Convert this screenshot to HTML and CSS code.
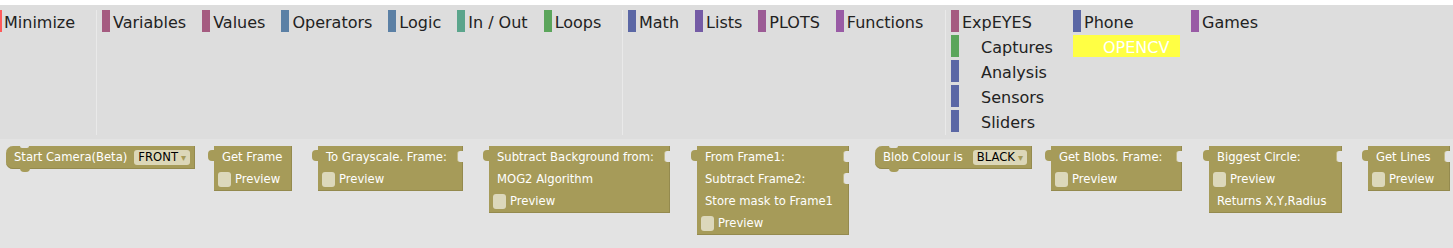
FILE: index.html
```html
<!DOCTYPE html>
<html lang="en">
<head>
  <meta charset="UTF-8">
  <title>Blocks - OpenCV</title>
  <link rel="stylesheet" href="styles.css">
</head>
<body>
  <nav class="toolbox">
    <div class="group g-min">
      <div class="cat"><span class="bar bar-min"></span>Minimize</div>
    </div>
    <div class="sep"></div>

    <div class="group g-core">
      <div class="cat"><span class="bar c-var"></span>Variables</div>
      <div class="cat"><span class="bar c-var"></span>Values</div>
      <div class="cat"><span class="bar c-op"></span>Operators</div>
      <div class="cat"><span class="bar c-op"></span>Logic</div>
      <div class="cat"><span class="bar c-io"></span>In / Out</div>
      <div class="cat"><span class="bar c-loop"></span>Loops</div>
    </div>
    <div class="sep"></div>

    <div class="group g-math">
      <div class="cat"><span class="bar c-math"></span>Math</div>
      <div class="cat"><span class="bar c-list"></span>Lists</div>
      <div class="cat"><span class="bar c-plot"></span>PLOTS</div>
      <div class="cat"><span class="bar c-fn"></span>Functions</div>
    </div>
    <div class="sep"></div>

    <div class="group g-ext">
      <div class="col col-eyes">
        <div class="cat"><span class="bar c-var"></span>ExpEYES</div>
        <div class="cat sub"><span class="bar c-loop"></span>Captures</div>
        <div class="cat sub"><span class="bar c-math"></span>Analysis</div>
        <div class="cat sub"><span class="bar c-math"></span>Sensors</div>
        <div class="cat sub"><span class="bar c-math"></span>Sliders</div>
      </div>
      <div class="col col-phone">
        <div class="cat"><span class="bar c-math"></span>Phone</div>
        <div class="cat sub sel"><span class="bar"></span>OPENCV</div>
      </div>
      <div class="col">
        <div class="cat"><span class="bar c-fn"></span>Games</div>
      </div>
    </div>
  </nav>

  <main class="workspace">
    <div class="blk hat b-camera">
      <div class="row">Start Camera(Beta) <span class="drop">FRONT<i>▾</i></span></div>
    </div>

    <div class="blk out b-frame">
      <div class="row">Get Frame</div>
      <div class="row chk"><span class="box"></span>Preview</div>
    </div>

    <div class="blk out b-gray">
      <div class="row">To Grayscale. Frame:<span class="notch"></span></div>
      <div class="row chk"><span class="box"></span>Preview</div>
    </div>

    <div class="blk out b-bgsub">
      <div class="row">Subtract Background from:<span class="notch"></span></div>
      <div class="row">MOG2 Algorithm</div>
      <div class="row chk"><span class="box"></span>Preview</div>
    </div>

    <div class="blk out b-diff">
      <div class="row">From Frame1:<span class="notch"></span></div>
      <div class="row">Subtract Frame2:<span class="notch"></span></div>
      <div class="row">Store mask to Frame1</div>
      <div class="row chk"><span class="box"></span>Preview</div>
    </div>

    <div class="blk hat b-colour">
      <div class="row">Blob Colour is <span class="drop">BLACK<i>▾</i></span></div>
    </div>

    <div class="blk out b-blobs">
      <div class="row">Get Blobs. Frame:<span class="notch"></span></div>
      <div class="row chk"><span class="box"></span>Preview</div>
    </div>

    <div class="blk out b-circle">
      <div class="row">Biggest Circle:<span class="notch"></span></div>
      <div class="row chk"><span class="box"></span>Preview</div>
      <div class="row">Returns X,Y,Radius</div>
    </div>

    <div class="blk out b-lines">
      <div class="row">Get Lines<span class="notch"></span></div>
      <div class="row chk"><span class="box"></span>Preview</div>
    </div>
  </main>
</body>
</html>
```

FILE: styles.css
```css
body {
  margin: 0;
  background: #fff;
  font-family: 'DejaVu Sans', sans-serif;
  overflow: hidden;
}

/* toolbox */
.toolbox {
  display: flex;
  margin-top: 5px;
  height: 134px;
  padding-top: 5px;
  box-sizing: border-box;
  background: #dddddd;
  font-size: 16px;
  color: #222;
}

.group {
  display: flex;
  align-items: flex-start;
  gap: 16px;
  padding-left: 5px;
  box-sizing: border-box;
}

.g-min { width: 96px; padding-left: 0; }
.g-core { width: 525px; }
.g-math { width: 322px; }
.g-ext { gap: 0; }

.sep {
  width: 1px;
  height: 125px;
  background: #e9e9e9;
}

.col {
  display: flex;
  flex-direction: column;
  align-items: flex-start;
  gap: 3px;
}
.col-eyes { width: 122px; }
.col-phone { width: 118px; }

.cat {
  display: flex;
  align-items: flex-start;
  height: 22px;
  line-height: 25px;
  white-space: nowrap;
}

.bar {
  width: 8px;
  height: 22px;
  margin-right: 3px;
  flex: none;
}
.bar-min { width: 2px; margin-right: 2px; background: #ff5a5a; }

.sub .bar { margin-right: 22px; }

.sel {
  background: #ffff44;
  color: #fff;
  padding-right: 11px;
}

.c-var { background: #a55b80; }
.c-op { background: #5b80a5; }
.c-io { background: #5ba58c; }
.c-loop { background: #5ba55b; }
.c-math { background: #5b67a5; }
.c-list { background: #745ba5; }
.c-plot { background: #9c5b95; }
.c-fn { background: #995ba5; }

/* workspace */
.workspace {
  display: flex;
  align-items: flex-start;
  height: 109px;
  padding: 7px 0 0 6px;
  box-sizing: border-box;
  background: #e3e3e3;
}

.blk {
  position: relative;
  flex: none;
  box-sizing: border-box;
  padding-bottom: 1px;
  margin-left: 26px;
  background: #a69b59;
  color: #fff;
  font-size: 11.6px;
  box-shadow: inset 0 -1px 0 #948a4e, inset -1px 0 0 #948a4e;
}

.hat + .blk.out { margin-left: 19px; }

.b-camera { width: 189px; margin-left: 0; }
.b-frame { width: 78px; }
.b-gray { width: 145px; }
.b-bgsub { width: 181px; }
.b-diff { width: 152px; margin-left: 27px; }
.b-colour { width: 157px; }
.b-blobs { width: 131px; margin-left: 20px; }
.b-circle { width: 133px; margin-left: 27px; }
.b-lines { width: 82px; }

.blk.out::before {
  content: "";
  position: absolute;
  left: -6px;
  top: 4px;
  width: 6px;
  height: 11px;
  background: #a69b59;
  border-radius: 4px 0 0 4px;
}

.blk.hat { border-radius: 7px 0 0 7px; }

.blk.hat::before {
  content: "";
  position: absolute;
  left: 14px;
  top: 0;
  width: 9px;
  height: 2px;
  background: #e3e3e3;
  border-radius: 0 0 4px 4px;
}
.blk.hat::after {
  content: "";
  position: absolute;
  left: 14px;
  bottom: -3px;
  width: 10px;
  height: 4px;
  background: #a69b59;
  border-radius: 0 0 4px 4px;
}

.row {
  position: relative;
  display: flex;
  align-items: center;
  height: 22px;
  padding: 0 8px;
  white-space: pre;
}
.row.chk { padding-left: 4px; }
.hat .row {
  justify-content: space-between;
  padding-right: 5px;
}

.box {
  width: 13px;
  height: 15px;
  margin-right: 4px;
  border-radius: 3px;
  background: #dcd8bb;
}

.notch {
  position: absolute;
  right: 0;
  top: 5px;
  width: 5px;
  height: 11px;
  background: #e3e3e3;
  border-left: 1px solid #c2b985;
  border-radius: 3px 0 0 3px;
}

.drop {
  display: inline-flex;
  align-items: center;
  height: 15px;
  padding: 0 4px 0 4px;
  border-radius: 3px;
  background: #dcd7b8;
  color: #000;
}
.drop i {
  font-style: normal;
  font-size: 10px;
  margin-left: 3px;
  color: #a69b59;
}
```
